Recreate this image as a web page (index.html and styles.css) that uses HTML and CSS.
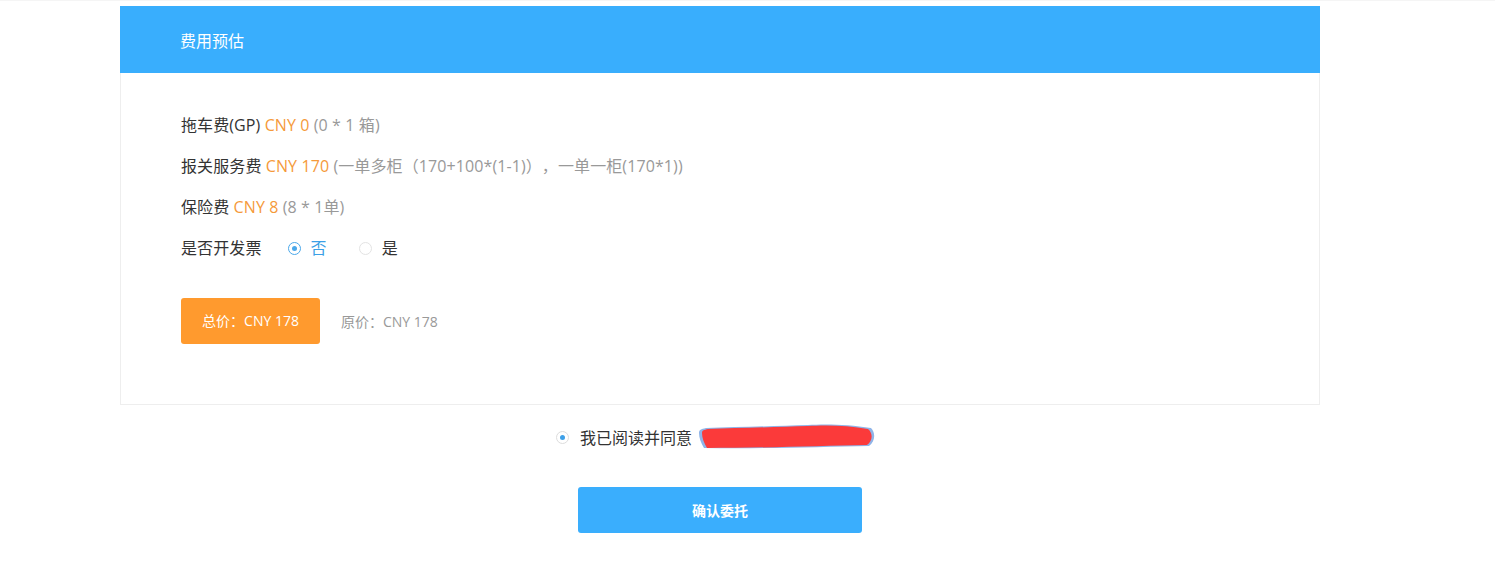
FILE: index.html
```html
<!DOCTYPE html>
<html lang="zh">
<head>
<meta charset="utf-8">
<title>费用预估</title>
<link rel="stylesheet" href="styles.css">
</head>
<body>
<div class="topline"></div>
<div class="wrap">
  <div class="panel">
    <div class="panel-head">费用预估</div>
    <div class="panel-body">
      <div class="row">拖车费(GP) <span class="price">CNY 0</span> <span class="note">(0 * 1 箱)</span></div>
      <div class="row">报关服务费 <span class="price">CNY 170</span> <span class="note">(一单多柜（170+100*(1-1)），一单一柜(170*1))</span></div>
      <div class="row">保险费 <span class="price">CNY 8</span> <span class="note">(8 * 1单)</span></div>
      <div class="row invoice">
        <span class="label">是否开发票</span>
        <label class="radio checked"><span class="dot"></span><span class="rtext">否</span></label>
        <label class="radio"><span class="dot"></span><span class="rtext">是</span></label>
      </div>
      <div class="total-row">
        <div class="total-btn">总价：CNY 178</div>
        <div class="orig">原价：CNY 178</div>
      </div>
    </div>
  </div>
  <div class="agree">
    <span class="agree-radio"></span>
    <span class="agree-text">我已阅读并同意</span>
    <span class="redact"><svg width="178" height="26" viewBox="0 0 178 26"><path d="M1 9 C1 14 3 19 6 24 C60 25 120 23 171 22 C177 18 178 9 173 4 C150 0 125 0 110 1 C80 2 40 3 8 4 C3 5 1 6 1 9 Z" fill="#8fb4e8"/><path d="M4 9 C4 14 6 19 9 24 C60 24 120 22 169 21 C175 17 175 9 170 5 C150 1 125 1 110 2 C80 3 40 4 10 5 C6 6 4 6 4 9 Z" fill="#fb3a3a"/></svg></span>
  </div>
  <div class="actions">
    <button class="confirm">确认委托</button>
  </div>
</div>
</body>
</html>
```

FILE: styles.css
```css
html, body {
  margin: 0;
  padding: 0;
  background: #fff;
  font-family: "Open Sans", "Noto Sans CJK SC", sans-serif;
  color: #333;
  font-size: 16px;
  text-spacing-trim: space-all;
}
.topline {
  height: 1px;
  background: #f5f5f5;
  margin-bottom: 5px;
}
.wrap {
  margin-left: 120px;
  width: 1200px;
}
.panel {
  border: 1px solid #eeeeee;
  border-top: none;
}
.panel-head {
  height: 67px;
  line-height: 71px;
  background: #39aefd;
  color: #fff;
  padding-left: 60px;
  font-size: 16px;
  margin: 0 -1px;
}
.panel-body {
  padding: 32px 60px 60px;
}
.row {
  height: 41px;
  line-height: 41px;
  font-size: 16px;
  color: #333;
  white-space: nowrap;
  letter-spacing: 0.1px;
}
.price {
  color: #f59a3a;
}
.note {
  color: #999;
}
.invoice {
  display: flex;
  align-items: center;
}
.label {
  margin-right: 26px;
}
.radio {
  display: inline-flex;
  align-items: center;
  margin-right: 32px;
  color: #333;
}
.radio .dot {
  width: 11px;
  height: 11px;
  border: 1px solid #e3e3e3;
  border-radius: 50%;
  margin-right: 10px;
  position: relative;
  background: #fff;
}
.radio.checked .dot {
  border-color: #4aa8ea;
}
.radio.checked .dot::after {
  content: "";
  position: absolute;
  left: 3px;
  top: 3px;
  width: 5px;
  height: 5px;
  border-radius: 50%;
  background: #4aa8ea;
}
.radio.checked .rtext {
  color: #3b9fe6;
}
.total-row {
  display: flex;
  align-items: center;
  margin-top: 29px;
}
.total-btn {
  width: 139px;
  height: 46px;
  line-height: 46px;
  text-align: center;
  background: #ff9a2e;
  color: #fff;
  border-radius: 3px;
  font-size: 14px;
}
.orig {
  margin-left: 21px;
  color: #999;
  font-size: 14px;
}
.agree {
  display: flex;
  align-items: center;
  justify-content: center;
  height: 26px;
  margin-top: 19px;
  padding-right: 8px;
}
.agree-radio {
  width: 11px;
  height: 11px;
  border: 1px solid #ddd;
  border-radius: 50%;
  position: relative;
  margin-right: 11px;
}
.agree-radio::after {
  content: "";
  position: absolute;
  left: 3px;
  top: 3px;
  width: 5px;
  height: 5px;
  border-radius: 50%;
  background: #3ea0e8;
}
.agree-text {
  font-size: 16px;
  color: #333;
  margin-right: 6px;
}
.redact {
  display: inline-block;
  height: 26px;
}
.redact svg {
  display: block;
}
.actions {
  display: flex;
  justify-content: center;
  margin-top: 37px;
}
.confirm {
  width: 284px;
  height: 46px;
  border: none;
  border-radius: 3px;
  background: #3aaefd;
  color: #fff;
  font-family: "Noto Sans CJK SC", sans-serif;
  font-size: 14px;
  font-weight: bold;
}
```
